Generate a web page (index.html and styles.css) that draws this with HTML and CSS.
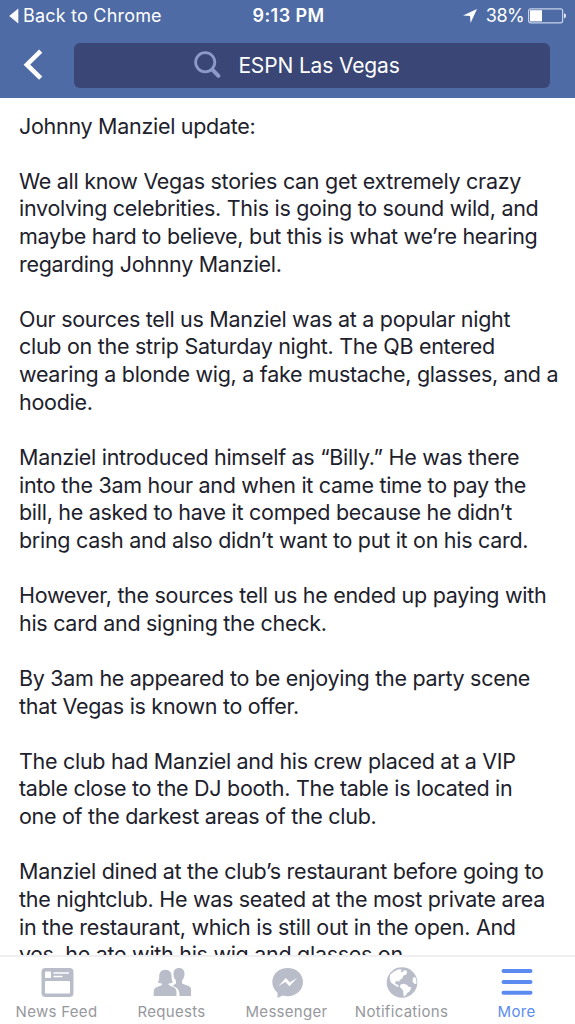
FILE: index.html
```html
<!DOCTYPE html>
<html lang="en">
<head>
  <meta charset="UTF-8" />
  <meta name="viewport" content="width=device-width, initial-scale=1" />
  <title>ESPN Las Vegas</title>
  <link rel="stylesheet" href="styles.css">
</head>
<body>
  <header class="header">
    <div class="status-bar">
      <div class="status-left">
        <svg width="10" height="16" viewBox="0 0 10 16"><path d="M9.3 0.5v15L0.2 8z" fill="#fff"/></svg>
        <span class="back-label">Back to Chrome</span>
      </div>
      <span class="time">9:13 PM</span>
      <div class="status-right">
        <svg width="14" height="14" viewBox="0 0 14 14"><path d="M14 0 7.6 14 7 7 0 6.4z" fill="#fff"/></svg>
        <span class="percent">38%</span>
        <svg class="battery" width="38" height="16" viewBox="0 0 38 16">
          <rect x="0.6" y="0.8" width="34" height="14" rx="2" fill="none" stroke="#c6d2ea" stroke-width="1.2"/>
          <rect x="2" y="2.2" width="12" height="11.2" fill="#fff"/>
          <path d="M36 5.2q2 .4 2 2.6t-2 2.6z" fill="#e6ecf8"/>
        </svg>
      </div>
    </div>
    <div class="nav-bar">
      <svg class="back" width="20" height="32" viewBox="0 0 20 32"><path d="M17.7 2.2 3.9 15.7 17.7 29.2" fill="none" stroke="#fff" stroke-width="4.6"/></svg>
      <div class="search">
        <svg width="27" height="28" viewBox="0 0 27 28" fill="none" stroke="#8c9aca" stroke-linecap="round">
          <circle cx="11.2" cy="11.2" r="9.6" stroke-width="2.8"/>
          <path d="M18.6 18.8 24.4 24.8" stroke-width="4"/>
        </svg>
        <span>ESPN Las Vegas</span>
      </div>
    </div>
  </header>

  <main class="post">
    <p>Johnny Manziel update:</p>
    <p>We all know Vegas stories can get extremely crazy<br>
      involving celebrities. This is going to sound wild, and<br>
      maybe hard to believe, but this is what we’re hearing<br>
      regarding Johnny Manziel.</p>
    <p>Our sources tell us Manziel was at a popular night<br>
      club on the strip Saturday night. The QB entered<br>
      wearing a blonde wig, a fake mustache, glasses, and a<br>
      hoodie.</p>
    <p>Manziel introduced himself as “Billy.” He was there<br>
      into the 3am hour and when it came time to pay the<br>
      bill, he asked to have it comped because he didn’t<br>
      bring cash and also didn’t want to put it on his card.</p>
    <p>However, the sources tell us he ended up paying with<br>
      his card and signing the check.</p>
    <p>By 3am he appeared to be enjoying the party scene<br>
      that Vegas is known to offer.</p>
    <p>The club had Manziel and his crew placed at a VIP<br>
      table close to the DJ booth. The table is located in<br>
      one of the darkest areas of the club.</p>
    <p>Manziel dined at the club’s restaurant before going to<br>
      the nightclub. He was seated at the most private area<br>
      in the restaurant, which is still out in the open. And<br>
      yes, he ate with his wig and glasses on.</p>
  </main>

  <nav class="tab-bar">
    <a class="tab">
      <svg width="38" height="32" viewBox="0.500 0 38 32">
        <rect x="4" y="1" width="32" height="29" rx="4" fill="#b9bdc9"/>
        <rect x="7.5" y="4.6" width="6" height="6.4" rx=".8" fill="#fff"/>
        <path d="M16 6h15.500M16 9.600h9" stroke="#fff" stroke-width="1.500"/>
        <rect x="7.500" y="14" width="25" height="12.600" rx="1" fill="#fff"/>
      </svg>
      <span>News Feed</span>
    </a>
    <a class="tab">
      <svg width="38" height="32" viewBox="0 0 38 32" fill="#b9bdc9">
        <path d="M20.500 7C20.500 3 22.700 1 26 1s5.500 2 5.500 6c0 3-1.200 5.200-2.500 6.500v3l6 2.300c2.600 1 3.300 2.800 3.300 5.600V29H26.500c0-5-.8-7.500-5-9.300l-2-.9 3.500-2.300v-3c-1.500-1.300-2.500-3.500-2.500-6.500z"/>
        <path d="M12.500 2.800c-4.500 0-6.300 3-6.300 7 0 2.600-.5 4.200-1.200 5.600 1.300.8 2.700 1.100 4 1.200v1.300l-5.500 2.300C1 21.300.7 23 .7 26v3h22.800v-3c0-3-.4-4.700-2.900-5.800l-5-2.300v-1.300c1.500-.1 2.900-.4 4.200-1.200-.8-1.400-1.200-3-1.200-5.600 0-4-1.700-7-6.100-7z" stroke="#fff" stroke-width="1.200" paint-order="stroke"/>
      </svg>
      <span>Requests</span>
    </a>
    <a class="tab">
      <svg width="38" height="32" viewBox="0 0 38 32">
        <path d="M19.700.9C11 .9 4.300 7 4.300 15c0 4.400 2 8.100 5.200 10.700V31l5.100-2.500c1.600.5 3.300.7 5.100.7C28.400 29.200 35 23 35 15S28.400.9 19.700.9z" fill="#b9bdc9"/>
        <path d="M10.500 18.900 17.800 11l4 4.200 7.200-4.200-7.500 8.200-4.100-4.100z" fill="#fff"/>
      </svg>
      <span>Messenger</span>
    </a>
    <a class="tab">
      <svg width="38" height="32" viewBox="0.500 0 38 32">
        <circle cx="19.500" cy="15.500" r="15.300" fill="#b9bdc9"/>
        <path d="M11.500 4.500 16 2.300l3.500.4-1.500 2 2 .6 1.700-2.300 3 1.300-.7 3.200-3 1-1.500 3.200-2.400 1.200-.3 2.200-1.300-1.200-2.500.5-.2 2.500 2.200.5 1.500 2-1.300.7-3-1.900-3.800-2.600-1.300-4.500.6-3.500z" fill="#fff"/>
        <path d="m18 17.500 3-.7 3.300 1 1.500 1.800 3 1-1.500 3.700-2.600 1.600-1.500 2.500-2 1-.6-6-3.200-3.500z" fill="#fff"/>
        <path d="m32.600 9.800-2.200 1.200-.4 3.500 2 2.400 2-.2q.3-3.500-1.400-6.900z" fill="#fff"/>
      </svg>
      <span>Notifications</span>
    </a>
    <a class="tab active">
      <svg width="38" height="32" viewBox="0 0 38 32"><path d="M5.500 4h27M5.500 15h27M5.500 25.800h27" stroke="#5b8bf0" stroke-width="4" stroke-linecap="round"/></svg>
      <span>More</span>
    </a>
  </nav>
</body>
</html>
```

FILE: styles.css
```css
* {
  box-sizing: border-box;
  margin: 0;
  padding: 0;
}
body {
  display: flex;
  flex-direction: column;
  height: 1024px;
  overflow: hidden;
  background: #fff;
  color: #1d212c;
  font-family: Inter, "Liberation Sans", sans-serif;
}
svg {
  display: block;
  flex-shrink: 0;
}
.header {
  height: 98px;
  flex-shrink: 0;
  background: #4e6ba5;
  color: #fff;
}
.status-bar {
  display: grid;
  grid-template-columns: 1fr auto 1fr;
  align-items: center;
  height: 32px;
  padding: 0 9px;
  font-size: 18px;
  line-height: 32px;
}
.status-left,
.status-right {
  display: flex;
  align-items: center;
}
.status-left {
  gap: 4px;
}
.status-right {
  justify-content: flex-end;
}
.back-label {
  letter-spacing: 0.2px;
}
.time {
  padding-left: 2px;
  font-weight: 600;
  letter-spacing: 0.4px;
}
.percent {
  margin: 0 4px 0 9px;
  letter-spacing: -0.6px;
}
.nav-bar {
  display: flex;
  align-items: center;
  height: 66px;
  padding: 0 25px 0 23px;
}
.search {
  display: flex;
  align-items: center;
  justify-content: center;
  flex-grow: 1;
  gap: 17px;
  height: 45px;
  margin-left: 31px;
  padding-right: 30px;
  border-radius: 6px;
  background: #3a4675;
  font-size: 21px;
  letter-spacing: -0.15px;
}
.post {
  flex: 1;
  min-height: 0;
  overflow: hidden;
  padding: 14.5px 0 0 19px;
  font-size: 21.5px;
  line-height: 27.62px;
  letter-spacing: -0.29px;
  white-space: nowrap;
}
.post p {
  margin-bottom: 27.62px;
}
.tab-bar {
  display: grid;
  grid-template-columns: repeat(5, 115px);
  justify-content: end;
  flex-shrink: 0;
  height: 69px;
  padding-right: 1px;
  border-top: 2px solid #efeff1;
  background: #fff;
  color: #97989d;
}
.tab {
  display: flex;
  flex-direction: column;
  align-items: center;
  gap: 3px;
  padding-top: 10px;
  font-size: 15px;
  line-height: 20px;
  letter-spacing: 0.3px;
}
.active {
  color: #5b8bf0;
}
```
